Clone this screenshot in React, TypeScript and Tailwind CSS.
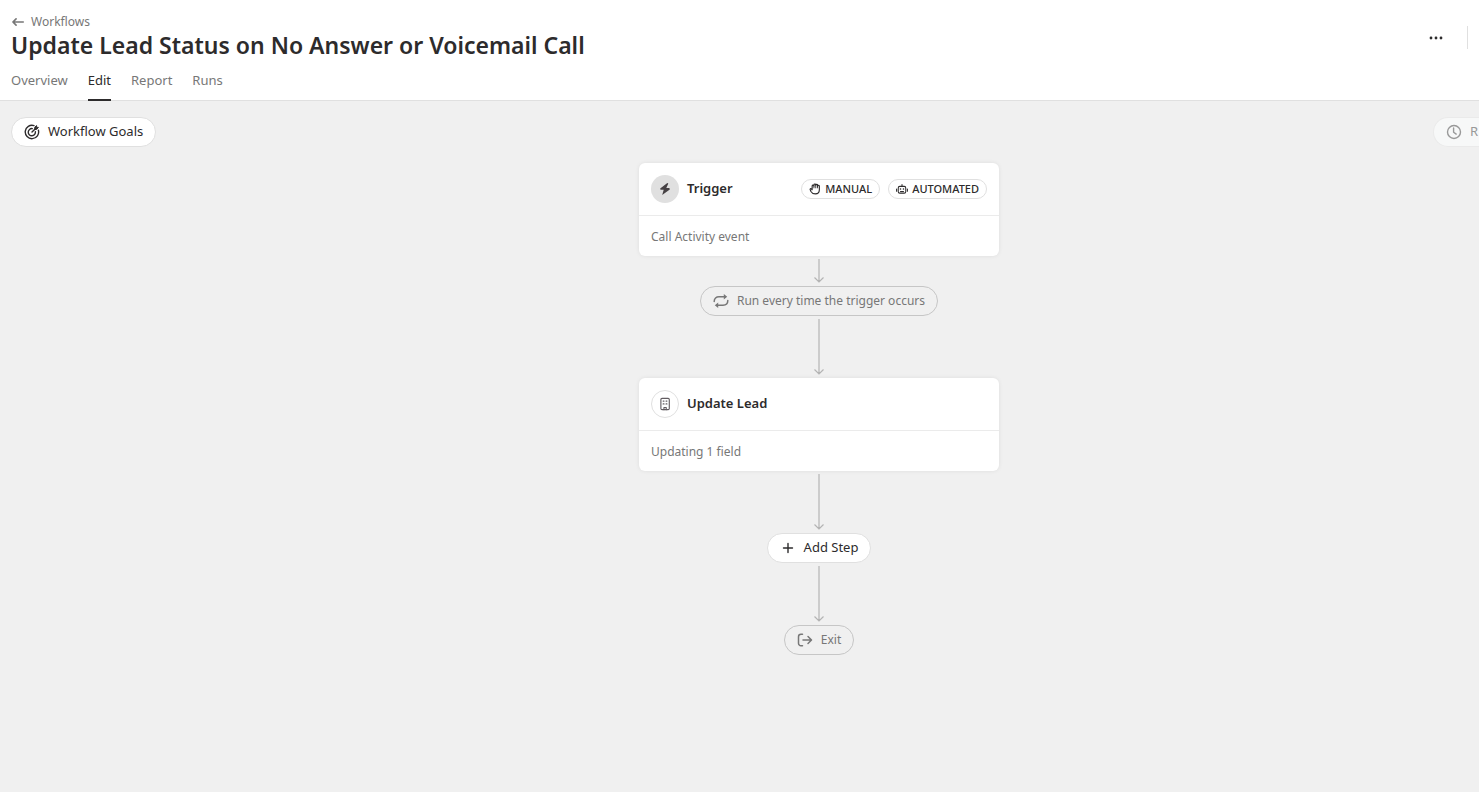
import type { ReactNode } from 'react'

interface IconProps {
  className?: string
}

function Svg({ className = 'size-4', children }: IconProps & { children: ReactNode }) {
  return (
    <svg
      viewBox="0 0 16 16"
      className={`shrink-0 ${className}`}
      fill="none"
      stroke="currentColor"
      strokeWidth="1.4"
      strokeLinecap="round"
      strokeLinejoin="round"
      aria-hidden="true"
    >
      {children}
    </svg>
  )
}

function BackIcon() {
  return (
    <Svg className="size-3.5">
      <path d="M14 8H2.2M5.8 4.5 2.2 8l3.6 3.5" strokeWidth="1.9" />
    </Svg>
  )
}

function GoalIcon() {
  return (
    <Svg>
      <path d="M10 1.6A6.7 6.7 0 1 0 14.4 6.2" />
      <path d="M8.3 4.6A3.6 3.6 0 1 0 11.4 7.7" />
      <path d="M8 8l3.6-3.6" />
      <path d="M10.8 5.2V3.2L12.6 1.6v1.8h1.8l-1.6 1.8z" fill="currentColor" strokeWidth="1" />
    </Svg>
  )
}

function ClockIcon() {
  return (
    <Svg>
      <circle cx="8" cy="8" r="6.5" />
      <path d="M7.6 4v4.2l2.6 1.9" />
    </Svg>
  )
}

function BoltIcon() {
  return (
    <Svg>
      <path d="M10.3 2 3.2 7.4l.3 1.3h3.2L5.2 14l7.6-5.5-.4-1.5H9.3l2-4.4z" fill="currentColor" stroke="none" />
    </Svg>
  )
}

function HandIcon() {
  return (
    <Svg className="size-3">
      <path d="M4.2 9V4a1.200 1.200 0 0 1 2.400 0V2.600a1.200 1.200 0 0 1 2.400 0V3a1.200 1.200 0 0 1 2.400 0v1.200a1.200 1.200 0 0 1 2.400 0V9c0 3.500-2.300 5.500-5.300 5.500S3.600 13 2.600 11.200L1.500 8.800c-.4-1.100.9-1.900 1.600-1L4.200 9" strokeWidth="1.5" />
      <path d="M6.600 4v2.500M9 3v3.500M11.400 4v2.500" strokeWidth="1.2" />
    </Svg>
  )
}

function RobotIcon() {
  return (
    <Svg className="size-3">
      <rect x="3" y="4.5" width="10" height="9" rx="2" />
      <path d="M8 4.5V2M.8 8v3M15.200 8v3M6 11.200h4" />
      <path d="M5.900 8h.2M9.900 8h.2" strokeWidth="1.9" />
    </Svg>
  )
}

function RepeatIcon() {
  return (
    <Svg>
      <path d="M1.200 8.500C1.200 5.500 3.200 3.800 6 3.800h6M14.800 7.500c0 3-2 4.700-4.800 4.700H4" strokeWidth="1.5" />
      <path d="M10.800 1 14.200 3.800 10.800 6.600zM5.200 9.400 1.800 12.200 5.200 15z" fill="currentColor" stroke="none" />
    </Svg>
  )
}

function BuildingIcon() {
  return (
    <Svg className="size-3.5">
      <rect x="3.3" y="1.5" width="9.6" height="13" rx="1.3" strokeWidth="1.3" />
      <path d="M6 4.700h.8M9.300 4.700h.8M6 7.900h.8M9.300 7.900h.8" strokeWidth="1.6" />
      <path d="M6.800 14.500V12h2.600v2.500" strokeWidth="1.3" />
    </Svg>
  )
}

function PlusIcon() {
  return (
    <Svg>
      <path d="M8 3.500v9M3.500 8h9" />
    </Svg>
  )
}

function ExitIcon() {
  return (
    <Svg>
      <path d="M5.500 2.300H4A2.500 2.500 0 0 0 1.500 4.800v6.400A2.500 2.500 0 0 0 4 13.700h1.500M6 8h8.200M11 4.500 14.500 8 11 11.500" strokeWidth="1.5" />
    </Svg>
  )
}

function Connector({ short = false }: { short?: boolean }) {
  return (
    <div className={`flex w-3 flex-col items-center py-[3px] text-[#b4b4b4] ${short ? 'h-[30px]' : 'h-[62px]'}`}>
      <div className="w-0.5 flex-1 bg-[#cccccc]" />
      <svg viewBox="0 0 12 6" className="h-1.5 w-3" fill="none" stroke="currentColor" strokeWidth="1.2" aria-hidden="true">
        <path d="M6 0v5M1.500.5 6 5l4.500-4.500" />
      </svg>
    </div>
  )
}

function Badge({ icon, children }: { icon: ReactNode; children: ReactNode }) {
  return (
    <span className="flex h-5 items-center gap-1 rounded-full border border-[#e0e0e0] px-[7px] text-[11px] font-medium">
      {icon}
      {children}
    </span>
  )
}

interface StepCardProps {
  title: string
  detail: string
  icon: ReactNode
  filled?: boolean
  badges?: ReactNode
}

function StepCard({ title, detail, icon, filled, badges }: StepCardProps) {
  return (
    <section className="w-[360px] rounded-md bg-white shadow-[0_0_4px_rgba(0,0,0,0.08)]">
      <div className="flex h-[53px] items-center gap-2 border-b border-[#ebebeb] px-3">
        <span
          className={`flex size-7 items-center justify-center rounded-full ${
            filled ? 'bg-[#e0e0e0] text-[#464144]' : 'border border-[#e0e0e0] text-[#625c60]'
          }`}
        >
          {icon}
        </span>
        <h2 className="flex-1 text-[13px] font-semibold">{title}</h2>
        {badges && <div className="flex gap-2">{badges}</div>}
      </div>
      <p className="flex h-10 items-center px-3 pt-0.5 text-xs text-[#777777]">{detail}</p>
    </section>
  )
}

const TABS = ['Overview', 'Edit', 'Report', 'Runs']

export default function App() {
  return (
    <div className="flex min-h-screen flex-col overflow-hidden bg-[#f0f0f0] font-['Noto_Sans',sans-serif] text-[13px] text-[#2d2b2c]">
      <header className="flex justify-between border-b border-[#e0e0e0] bg-white pl-[11px]">
        <div>
          <a href="#workflows" className="mt-[13px] flex h-[18px] w-fit items-center gap-1.5 text-xs text-[#777777]">
            <BackIcon />
            Workflows
          </a>
          <h1 className="mb-[3px] text-[23px] leading-7 font-semibold">Update Lead Status on No Answer or Voicemail Call</h1>
          <nav className="flex gap-5">
            {TABS.map((tab) => (
              <a
                key={tab}
                href={`#${tab.toLowerCase()}`}
                className={
                  tab === 'Edit'
                    ? '-mb-px flex h-[39px] items-center border-b-2 border-[#2d2b2c]'
                    : 'flex h-[37px] items-center text-[#777777]'
                }
              >
                {tab}
              </a>
            ))}
          </nav>
        </div>
        <div className="mt-[26px] mr-[11px] flex h-[23px] items-center border-r border-[#e0e0e0] pr-[23px]">
          <button type="button" aria-label="More actions">
            <Svg>
              <path d="M3 8h.01M8 8h.01M13 8h.01" strokeWidth="2.8" />
            </Svg>
          </button>
        </div>
      </header>

      <main className="flex-1 py-4">
        <div className="flex justify-between pl-[11px]">
          <button type="button" className="flex h-[30px] items-center gap-2 rounded-full border border-[#e0e0e0] bg-white px-3">
            <GoalIcon />
            Workflow Goals
          </button>
          <button
            type="button"
            className="flex h-[30px] w-[46px] items-center gap-2 overflow-hidden rounded-l-full border border-r-0 border-[#eaeaea] bg-[#f7f8f8] pl-3 text-[#999999]"
          >
            <ClockIcon />
            R
          </button>
        </div>

        <div className="mt-4 flex flex-col items-center pl-[159px]">
          <StepCard
            title="Trigger"
            detail="Call Activity event"
            icon={<BoltIcon />}
            filled
            badges={
              <>
                <Badge icon={<HandIcon />}>MANUAL</Badge>
                <Badge icon={<RobotIcon />}>AUTOMATED</Badge>
              </>
            }
          />
          <Connector short />
          <div className="flex h-[30px] items-center gap-2 rounded-full border border-[#c6c6c6] px-3 text-xs text-[#777777]">
            <RepeatIcon />
            Run every time the trigger occurs
          </div>
          <Connector />
          <StepCard title="Update Lead" detail="Updating 1 field" icon={<BuildingIcon />} />
          <Connector />
          <button type="button" className="flex h-[30px] items-center gap-2 rounded-full border border-[#e0e0e0] bg-white px-3">
            <PlusIcon />
            Add Step
          </button>
          <Connector />
          <div className="flex h-[30px] items-center gap-2 rounded-full border border-[#c6c6c6] px-3 text-xs text-[#777777]">
            <ExitIcon />
            Exit
          </div>
        </div>
      </main>
    </div>
  )
}
